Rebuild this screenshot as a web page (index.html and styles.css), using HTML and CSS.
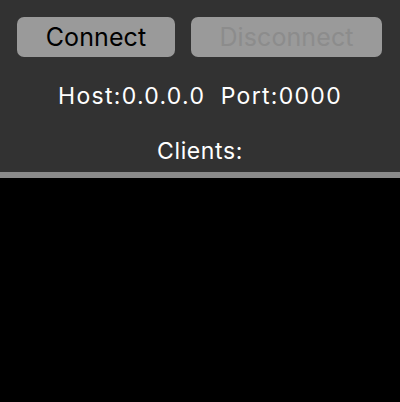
FILE: index.html
```html
<!DOCTYPE html>
<html>
<head>
<meta charset="utf-8">
<link rel="stylesheet" href="styles.css">
</head>
<body>
<div class="panel">
  <div class="buttons">
    <button class="btn btn-connect">Connect</button>
    <button class="btn btn-disconnect" disabled>Disconnect</button>
  </div>
  <div class="info">Host:0.0.0.0&nbsp; Port:0000</div>
  <div class="clients">Clients:</div>
</div>
<div class="divider"></div>
<div class="list"></div>
</body>
</html>
```
FILE: styles.css
```css
html, body {
  margin: 0;
  padding: 0;
  width: 400px;
  height: 402px;
  overflow: hidden;
  background: #000;
  font-family: Inter, "Liberation Sans", Arial, sans-serif;
}
.panel {
  background: #323232;
  height: 172px;
  display: flex;
  flex-direction: column;
  align-items: center;
}
.buttons {
  display: flex;
  gap: 16px;
  padding: 17px 18px 0 17px;
  width: 100%;
  box-sizing: border-box;
}
.btn {
  height: 40px;
  border: none;
  border-radius: 7px;
  background: #9a9a9a;
  font-family: Inter, "Liberation Sans", Arial, sans-serif;
  font-size: 25px;
  letter-spacing: 0.1px;
  padding: 0;
  margin: 0;
}
.btn-connect {
  width: 158px;
  color: #000;
}
.btn-disconnect {
  width: 191px;
  color: #8c8c8c;
}
.info {
  color: #fff;
  font-size: 23px;
  letter-spacing: 1.3px;
  margin-top: 26px;
  line-height: 26px;
}
.clients {
  color: #fff;
  font-size: 23px;
  letter-spacing: 0.6px;
  margin-top: 29px;
  line-height: 26px;
}
.divider {
  height: 6px;
  background: #8a8a8a;
}
.list {
  background: #000;
  height: 224px;
}
```
